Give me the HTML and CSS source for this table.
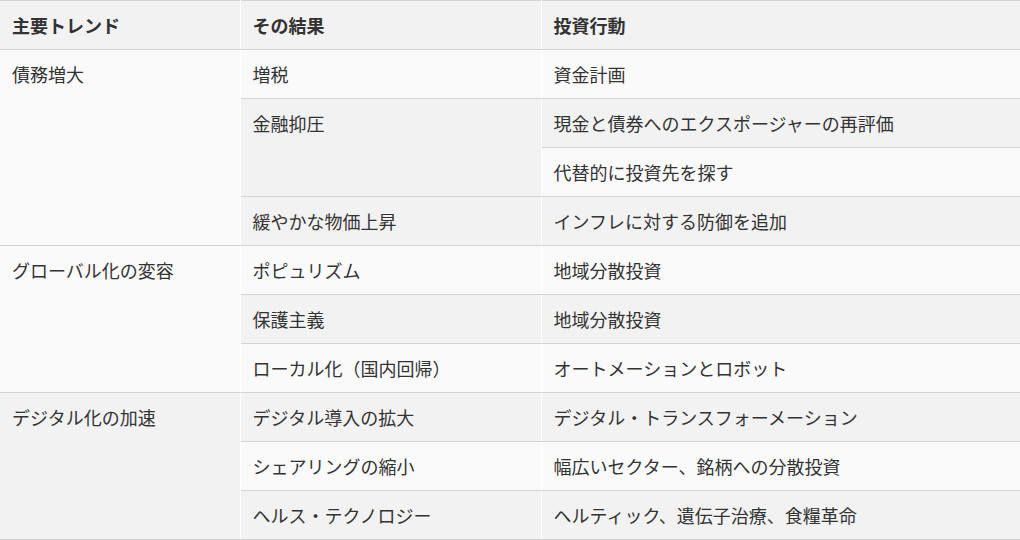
FILE: index.html
```html
<!DOCTYPE html>
<html lang="ja">
  <head>
    <meta charset="UTF-8" />
    <meta name="viewport" content="width=device-width, initial-scale=1.0" />
    <title>主要トレンドと投資行動</title>
    <link rel="stylesheet" href="styles.css">
  </head>
  <body>
    <table class="trend-table">
      <colgroup>
        <col class="col-trend" />
        <col class="col-result" />
        <col class="col-action" />
      </colgroup>
      <thead>
        <tr>
          <th>主要トレンド</th>
          <th>その結果</th>
          <th>投資行動</th>
        </tr>
      </thead>
      <tbody>
        <tr>
          <td rowspan="4">債務増大</td>
          <td>増税</td>
          <td>資金計画</td>
        </tr>
        <tr>
          <td rowspan="2">金融抑圧</td>
          <td>現金と債券へのエクスポージャーの再評価</td>
        </tr>
        <tr>
          <td>代替的に投資先を探す</td>
        </tr>
        <tr>
          <td>緩やかな物価上昇</td>
          <td>インフレに対する防御を追加</td>
        </tr>
        <tr>
          <td rowspan="3">グローバル化の変容</td>
          <td>ポピュリズム</td>
          <td>地域分散投資</td>
        </tr>
        <tr>
          <td>保護主義</td>
          <td>地域分散投資</td>
        </tr>
        <tr>
          <td>ローカル化（国内回帰）</td>
          <td>オートメーションとロボット</td>
        </tr>
        <tr>
          <td rowspan="3">デジタル化の加速</td>
          <td>デジタル導入の拡大</td>
          <td>デジタル・トランスフォーメーション</td>
        </tr>
        <tr>
          <td>シェアリングの縮小</td>
          <td>幅広いセクター、銘柄への分散投資</td>
        </tr>
        <tr>
          <td>ヘルス・テクノロジー</td>
          <td>ヘルティック、遺伝子治療、食糧革命</td>
        </tr>
      </tbody>
    </table>
  </body>
</html>
```

FILE: styles.css
```css
body {
  margin: 0;
  overflow: hidden;
  background-color: #fff;
  color: #333;
  font-family: "Noto Sans CJK JP", "Noto Sans", sans-serif;
  font-size: 18px;
}
.trend-table {
  width: 1060px;
  border-collapse: collapse;
  table-layout: fixed;
}
.col-trend {
  width: 240px;
}
.col-result {
  width: 301px;
}
.trend-table th,
.trend-table td {
  height: 24px;
  padding: 12px 12px;
  line-height: 24px;
  text-align: left;
  vertical-align: top;
  border-top: 1px solid #d3d3d3;
  border-bottom: 1px solid #d3d3d3;
  border-right: 1px solid #fff;
  white-space: nowrap;
}
.trend-table th {
  font-weight: bold;
  background-color: #f2f2f2;
}
.trend-table tbody tr:nth-child(odd) {
  background-color: #fafafa;
}
.trend-table tbody tr:nth-child(even) {
  background-color: #f2f2f2;
}
```
